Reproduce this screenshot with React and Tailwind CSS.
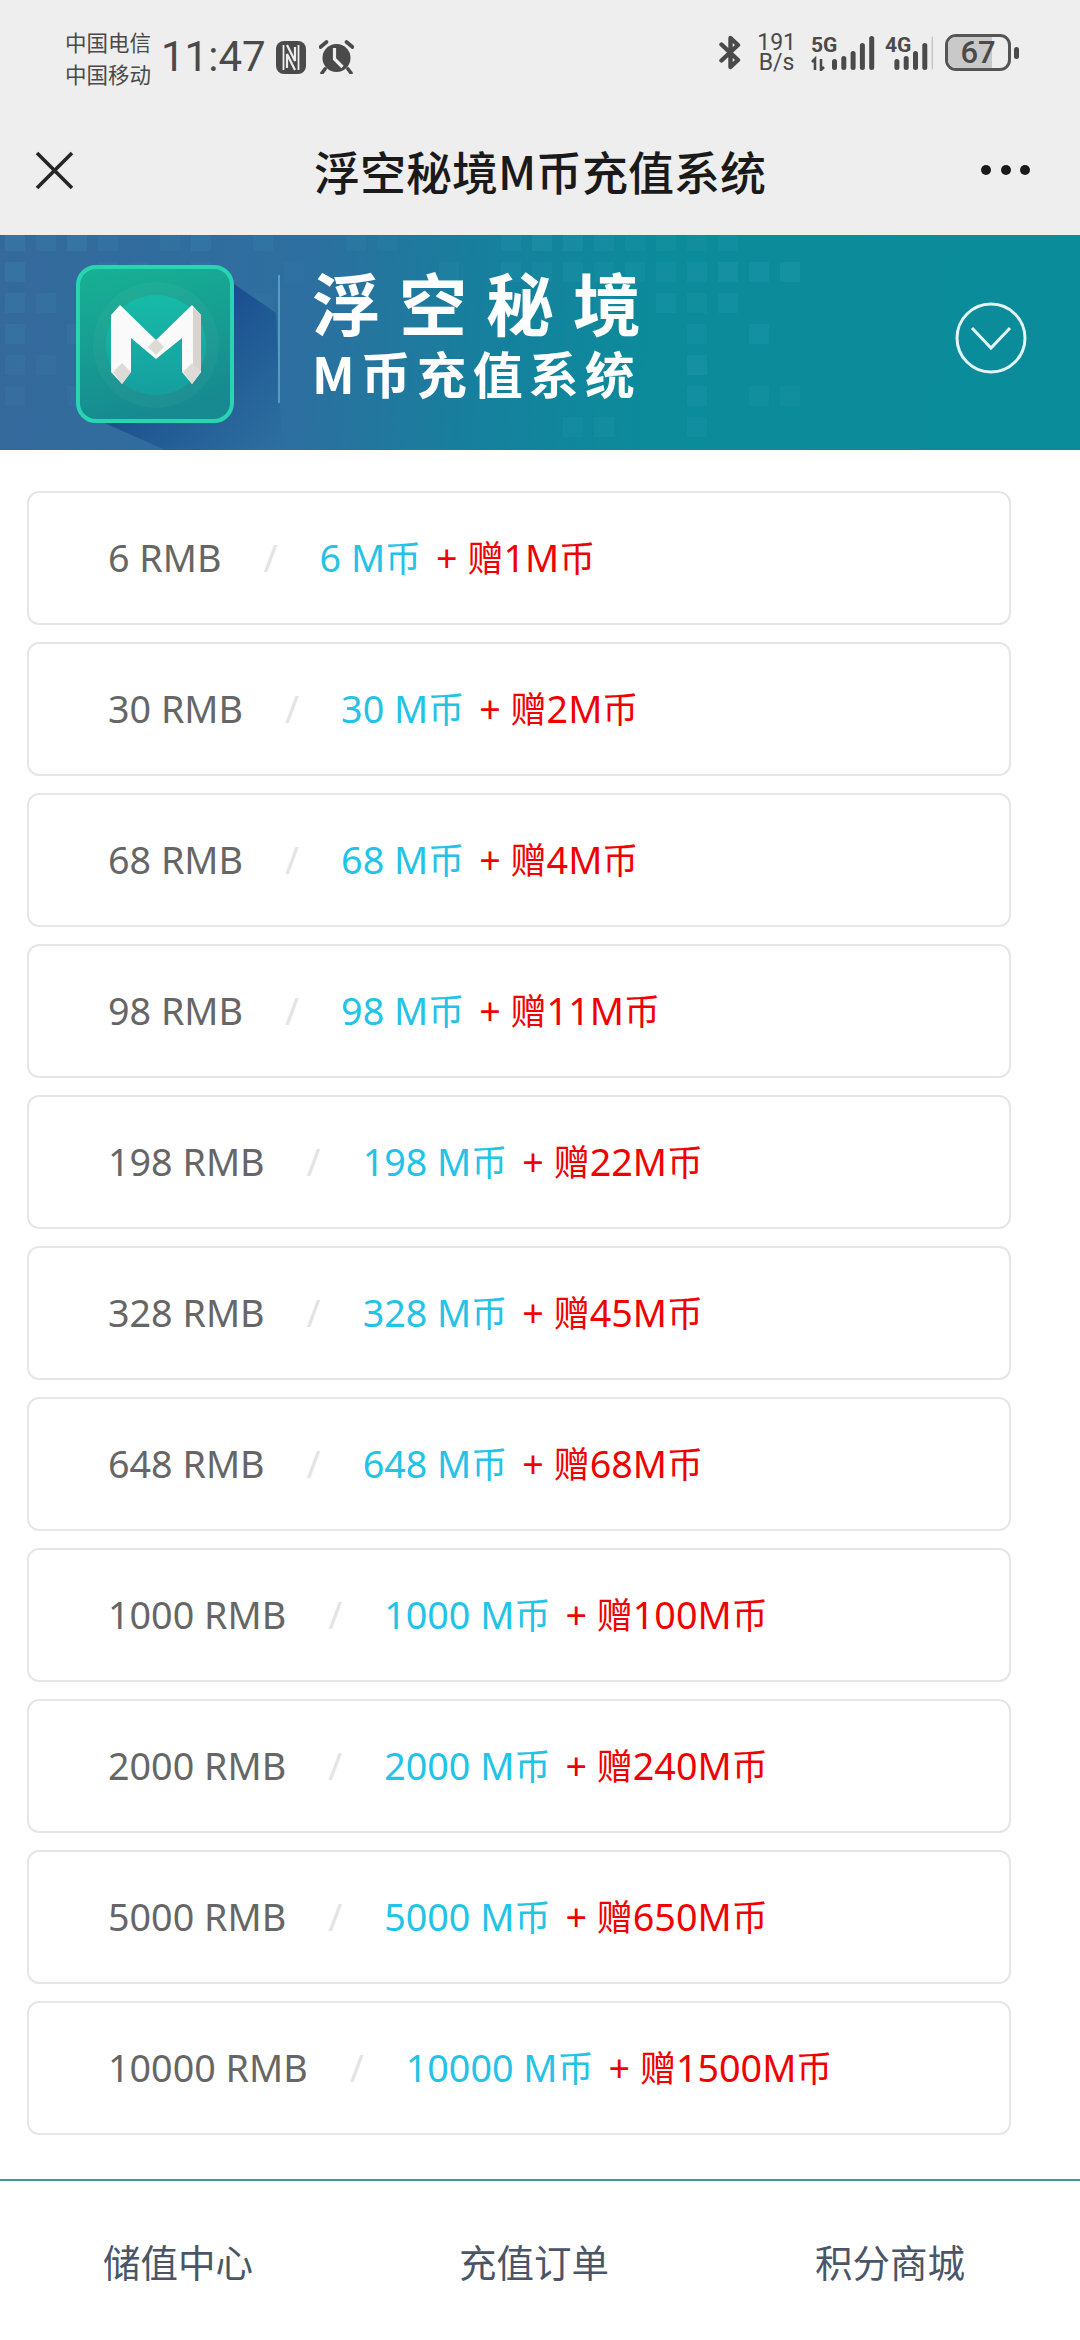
const plans = [
  ["6", "1"],
  ["30", "2"],
  ["68", "4"],
  ["98", "11"],
  ["198", "22"],
  ["328", "45"],
  ["648", "68"],
  ["1000", "100"],
  ["2000", "240"],
  ["5000", "650"],
  ["10000", "1500"],
];

const squares = [
  [0, 0, .5], [1, 0, .35], [2, 0, .5], [3, 0, .3], [5, 0, .25], [6, 0, .4], [8, 0, .3], [11, 0, .25], [12, 0, .2], [16, 0, .4], [17, 0, .55], [18, 0, .5], [19, 0, .4], [20, 0, .3], [21, 0, .35], [22, 0, .25], [23, 0, .3],
  [0, 1, .45], [3, 1, .4], [4, 1, .25], [6, 1, .3], [9, 1, .2], [14, 1, .3], [16, 1, .4], [17, 1, .3], [18, 1, .35], [19, 1, .3], [20, 1, .4], [21, 1, .3], [22, 1, .4], [23, 1, .5], [24, 1, .5], [25, 1, .55],
  [0, 2, .4], [1, 2, .3], [3, 2, .35], [5, 2, .2], [8, 2, .2], [16, 2, .3], [19, 2, .3], [21, 2, .4], [22, 2, .35], [23, 2, .4],
  [0, 3, .35], [2, 3, .3], [4, 3, .3], [22, 3, .3], [24, 3, .45],
  [0, 4, .3], [1, 4, .25], [3, 4, .3], [22, 4, .5],
  [0, 5, .25], [2, 5, .2], [22, 5, .4], [24, 5, .35], [25, 5, .3],
  [18, 6, .3], [19, 6, .35], [22, 6, .3],
];

function CloseIcon() {
  return (
    <svg width="39" height="39" viewBox="0 0 39 39" fill="none" stroke="#262626" strokeWidth="3.6">
      <path d="M2 2 L37 37 M37 2 L2 37" />
    </svg>
  );
}

function NfcIcon() {
  return (
    <svg width="30" height="33" viewBox="0 0 30 33">
      <rect width="30" height="33" rx="8" fill="#4a4a4a" />
      <path d="M7.5 4 V29 M22.5 4 V29" fill="none" stroke="#eeeeee" strokeWidth="1.8" />
      <path d="M11 4 L19 20 V6 M19 29 L11 13 V27" fill="none" stroke="#eeeeee" strokeWidth="2.2" />
    </svg>
  );
}

function AlarmIcon() {
  return (
    <svg width="35" height="34" viewBox="0 0 35 34">
      <circle cx="17.5" cy="18" r="14" fill="#4a4a4a" />
      <path d="M15.5 8 V19 L23.5 27" fill="none" stroke="#eeeeee" strokeWidth="3.2" />
      <path d="M1.5 7 L7.5 2 M33.5 7 L27.5 2 M6 29 L3 33 M29 29 L32 33" fill="none" stroke="#4a4a4a" strokeWidth="3.6" strokeLinecap="round" />
    </svg>
  );
}

function BluetoothIcon() {
  return (
    <svg width="22" height="35" viewBox="0 0 22 35" fill="none" stroke="#4a4a4a" strokeWidth="4.4" strokeLinejoin="round" strokeLinecap="round">
      <path d="M2.5 9.5 L19 25 L11.5 32 V3 L19 10 L2.5 25.5" />
    </svg>
  );
}

function SignalBars({ tops, last = "#4a4a4a", x }) {
  return tops.map((t, i) => (
    <rect key={i} x={x + i * 9.3} y={t} width="5" height={35 - t} rx="2.5" fill={i === tops.length - 1 ? last : "#4a4a4a"} />
  ));
}

function Signals() {
  return (
    <svg className="-mt-[6px]" width="122" height="42" viewBox="0 -6 122 42">
      <text x="0" y="17" fontSize="21" fontWeight="700" fill="#4a4a4a" fontFamily="Roboto, sans-serif">5G</text>
      <path d="M4 35 V24 L1 27 M10 24 V35 L13 32" fill="none" stroke="#4a4a4a" strokeWidth="2.6" />
      <SignalBars tops={[24, 21, 16, 8, 1]} x={21} />
      <text x="74" y="17" fontSize="21" fontWeight="700" fill="#4a4a4a" fontFamily="Roboto, sans-serif">4G</text>
      <SignalBars tops={[24, 21, 16, 8, 1]} last="#c4c4c4" x={83.4} />
    </svg>
  );
}

function Battery() {
  return (
    <div className="flex items-center gap-[3px]">
      <div className="relative w-[66px] h-[37px] rounded-[11px] border-[3px] border-[#555555] overflow-hidden flex items-center justify-center">
        <div className="absolute left-0 top-0 bottom-0 w-[44px] bg-[#c9c9c9]" />
        <span className="relative text-[31px] leading-none font-medium text-[#4a4a4a] font-['Roboto',sans-serif]">67</span>
      </div>
      <div className="w-[5px] h-[12px] rounded-full bg-[#4a4a4a]" />
    </div>
  );
}

function StatusBar() {
  return (
    <div className="h-[105px] flex items-start justify-between pl-[65px] pr-[61px] pt-[24px] text-[#4a4a4a]">
      <div className="flex items-center">
        <div className="text-[21.5px] leading-[32px] font-['Noto_Sans_CJK_SC',sans-serif] pt-[2px]">
          <div>中国电信</div>
          <div>中国移动</div>
        </div>
        <span className="ml-[10px] text-[42px] leading-none font-['Roboto',sans-serif]">11:47</span>
        <span className="ml-[10px]"><NfcIcon /></span>
        <span className="ml-[13px]"><AlarmIcon /></span>
      </div>
      <div className="flex items-start pt-[11px]">
        <BluetoothIcon />
        <div className="ml-[16px] -mt-[2px] text-[23px] leading-[20px] text-center font-['Roboto',sans-serif]">
          <div>191</div>
          <div>B/s</div>
        </div>
        <span className="ml-[15px]"><Signals /></span>
        <span className="ml-[12px] -mt-[1px]"><Battery /></span>
      </div>
    </div>
  );
}

function Logo() {
  return (
    <svg className="absolute left-0 top-0" width="1080" height="215" viewBox="0 0 1080 215">
      <defs>
        <linearGradient id="shade" x1="0" y1="0" x2="1" y2="1">
          <stop offset="0.35" stopColor="#17488d" stopOpacity="0.95" />
          <stop offset="1" stopColor="#17558f" stopOpacity="0" />
        </linearGradient>
        <linearGradient id="tile" x1="0" y1="0" x2="0.25" y2="1">
          <stop offset="0" stopColor="#17b294" />
          <stop offset="1" stopColor="#168a90" />
        </linearGradient>
        <linearGradient id="disc" x1="0" y1="0" x2="0" y2="1">
          <stop offset="0" stopColor="#14c0ad" />
          <stop offset="1" stopColor="#13a3a3" />
        </linearGradient>
      </defs>
      {squares.map(([c, r, o], i) => (
        <rect key={i} x={5 + c * 31} y={-4 + r * 31} width="20" height="20" fill="#45b4cc" opacity={o * 0.28} />
      ))}
      <path d="M224 42 L276 78 L282 215 H165 L100 186 Z" fill="url(#shade)" />
      <rect x="78" y="32" width="154" height="154" rx="18" fill="url(#tile)" stroke="#28d5b0" strokeWidth="4" />
      <circle cx="156" cy="110" r="63" fill="#fff" opacity="0.035" />
      <circle cx="156" cy="110" r="50" fill="url(#disc)" opacity="0.75" />
      <path d="M111 80 L120 70 L156 105 L192 70 L201 80 V137 L192 149 L182 137 V103 L156 124 L131 103 V137 L122 149 L111 137 Z" fill="#fbfafa" />
      <path d="M193 72 L201 80 V137 L193 130 Z" fill="#d9d4d2" />
      <path d="M122 128 L131 137 L122 149 L113 137 Z M192 128 L201 137 L192 149 L183 137 Z M156 104 L164 112 L156 120 L148 112 Z" fill="#dedad8" />
      <path d="M279 40 V168" stroke="#6fc0d8" strokeWidth="2" opacity="0.6" />
    </svg>
  );
}

function Banner() {
  return (
    <div className="relative h-[215px] overflow-hidden flex items-center justify-between pl-[312px] pr-[52px] bg-[linear-gradient(95deg,#35699c_0%,#2d6fa0_28%,#16809d_45%,#0c8b9b_60%,#0b8c9b_100%)]">
      <Logo />
      <div className="relative -mt-[16px] text-white font-semibold font-['Noto_Sans_CJK_SC',sans-serif] blur-[0.5px]">
        <div className="text-[68px] leading-[74px] tracking-[19px]">浮空秘境</div>
        <div className="text-[50px] leading-[66px] tracking-[6px]">M币充值系统</div>
      </div>
      <svg className="relative -mt-[9px]" width="74" height="74" viewBox="0 0 74 74" fill="none" stroke="#e4f5f6" strokeWidth="3">
        <circle cx="37" cy="37" r="34" />
        <path d="M18 27 L37 47 L56 27" />
      </svg>
    </div>
  );
}

function Plan({ rmb, bonus }) {
  return (
    <div className="h-[134px] rounded-[12px] border-2 border-[#e6e6e6] bg-white flex items-center pl-[79px] whitespace-nowrap text-[37.7px]">
      <span className="text-[#666666]">{rmb} RMB</span>
      <span className="mx-[42px] text-[#e4e4e4]">/</span>
      <span className="text-[#22c3e6]">{rmb} M<span className="text-[36px]">币</span></span>
      <span className="ml-[15px] text-[#f00000]">+ <span className="text-[36px]">赠</span>{bonus}M<span className="text-[36px]">币</span></span>
    </div>
  );
}

export default function App() {
  return (
    <div className="w-[1080px] h-[2340px] bg-white overflow-hidden font-['Noto_Sans','Noto_Sans_CJK_SC',sans-serif]">
      <div className="bg-[#eeeeee]">
        <StatusBar />
        <div className="h-[130px] grid grid-cols-[1fr_auto_1fr] items-center px-[35px]">
          <CloseIcon />
          <h1 className="text-[46px] leading-none font-medium text-[#1a1a1a] font-['Noto_Sans_CJK_SC',sans-serif]">浮空秘境M币充值系统</h1>
          <div className="flex justify-end gap-[9.5px] pr-[15px]">
            <span className="w-[10px] h-[10px] rounded-full bg-[#1a1a1a]" />
            <span className="w-[10px] h-[10px] rounded-full bg-[#1a1a1a]" />
            <span className="w-[10px] h-[10px] rounded-full bg-[#1a1a1a]" />
          </div>
        </div>
      </div>
      <Banner />
      <div className="w-[984px] ml-[27px] pt-[41px] flex flex-col gap-[17px]">
        {plans.map(([rmb, bonus]) => <Plan key={rmb} rmb={rmb} bonus={bonus} />)}
      </div>
      <div className="mt-[44px] border-t-2 border-[#3b9a8f]">
        <div className="w-[1068px] h-[160px] grid grid-cols-3 items-center text-center text-[37.5px] text-[#4a5568] font-['Noto_Sans_CJK_SC',sans-serif]">
          <span>储值中心</span>
          <span>充值订单</span>
          <span>积分商城</span>
        </div>
      </div>
    </div>
  );
}
